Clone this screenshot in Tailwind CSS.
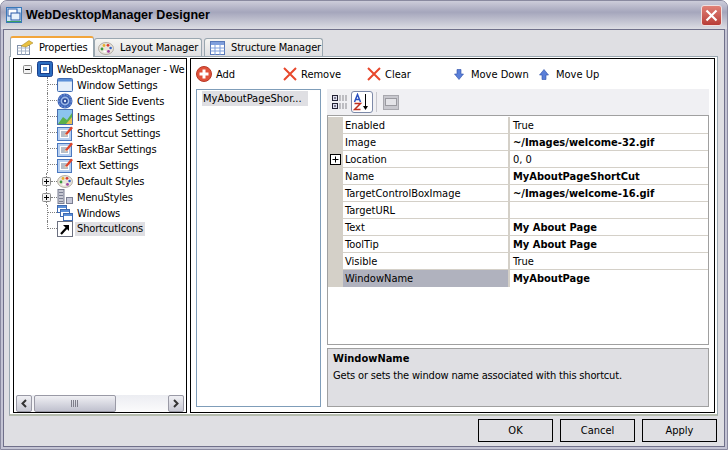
<!DOCTYPE html>
<html>
<head>
<meta charset="utf-8">
<script src="https://cdn.jsdelivr.net/npm/@tailwindcss/browser@4"></script>
</head>
<body class="m-0 overflow-hidden bg-white">
<svg width="0" height="0" class="absolute">
  <defs>
    <symbol id="win" viewBox="0 0 16 16"><rect x="0.5" y="1.5" width="15" height="13" rx="1" fill="#dbe8f8" stroke="#3f6ab0"/><rect x="1" y="2" width="14" height="2.5" fill="#5b8fd8"/><rect x="2" y="5" width="12" height="8" fill="#e4eefa"/></symbol>
    <symbol id="gear" viewBox="0 0 16 16"><circle cx="8" cy="8" r="7.5" fill="#3d64b8"/><circle cx="8" cy="8" r="6.2" fill="none" stroke="#8aa8e0" stroke-dasharray="1.5 1.5"/><circle cx="8" cy="8" r="4.4" fill="#9db9e8"/><circle cx="8" cy="8" r="2.8" fill="#2a4a9a"/><circle cx="8" cy="8" r="1.2" fill="#e4ecfa"/></symbol>
    <symbol id="img" viewBox="0 0 16 16"><rect x="0.5" y="0.5" width="15" height="15" fill="#8cc4ee" stroke="#4a6fb0"/><path d="M1 15 L6 8 L10 11 L15 4 V15 Z" fill="#5ab04a"/><path d="M9 15 L15 8 V15 Z" fill="#e8c050"/></symbol>
    <symbol id="note" viewBox="0 0 16 16"><rect x="0.5" y="2.5" width="14" height="13" fill="#b8d0f0" stroke="#4a78c0"/><rect x="3" y="5" width="9" height="8" fill="#fff"/><path d="M4 7h6M4 9h5M4 11h7" stroke="#6a7a90"/><path d="M8 9 L14 1.5 L16 3 L10 10 Z" fill="#e0452a"/><path d="M8 9 L7.5 11 L10 10 Z" fill="#f0d0a0"/></symbol>
    <symbol id="palette" viewBox="0 0 16 16"><ellipse cx="8" cy="8.5" rx="7.5" ry="6" fill="#e9e4da" stroke="#9a9488" stroke-width="0.7"/><circle cx="4" cy="9" r="1.4" fill="#3a9a40"/><circle cx="6" cy="5.5" r="1.4" fill="#e8b030"/><circle cx="10" cy="5.3" r="1.4" fill="#d83a30"/><circle cx="12.6" cy="8" r="1.3" fill="#3060c8"/><circle cx="10.5" cy="11.4" r="1.4" fill="#a040a0"/><ellipse cx="6.8" cy="11.4" rx="1.4" ry="1" fill="#fff"/></symbol>
    <symbol id="menu" viewBox="0 0 16 16"><rect x="1" y="0.5" width="6" height="14" fill="#c6c8d2" stroke="#7a7e92"/><path d="M2 3.5h4M2 6.5h4M2 9.5h4M2 12.5h4" stroke="#7a7e92"/><rect x="9.5" y="8.5" width="6" height="6" fill="#c6c8d8" stroke="#7a7e92"/></symbol>
    <symbol id="wins" viewBox="0 0 16 16"><rect x="0.5" y="0.5" width="9" height="7" fill="#fff" stroke="#3f6ab0"/><rect x="1" y="1" width="8" height="2" fill="#5b8fd8"/><rect x="3.5" y="4.5" width="9" height="7" fill="#fff" stroke="#3f6ab0"/><rect x="4" y="5" width="8" height="2" fill="#5b8fd8"/><rect x="6.5" y="8.5" width="9" height="7" fill="#fff" stroke="#3f6ab0"/><rect x="7" y="9" width="8" height="2" fill="#5b8fd8"/></symbol>
    <symbol id="short" viewBox="0 0 16 16"><rect x="0.5" y="0.5" width="15" height="15" fill="#fff" stroke="#6b7080"/><path d="M4 13 L10 6.5" stroke="#000" stroke-width="2.2"/><path d="M6 4 H12 V10 Z" fill="#000"/></symbol>
    <symbol id="minus" viewBox="0 0 9 9"><rect x="0.5" y="0.5" width="8" height="8" rx="1" fill="#f2f2f2" stroke="#8a8a8a"/><path d="M2 4.5h5" stroke="#000"/></symbol>
    <symbol id="plus" viewBox="0 0 9 9"><rect x="0.5" y="0.5" width="8" height="8" rx="1" fill="#f2f2f2" stroke="#8a8a8a"/><path d="M2 4.5h5M4.5 2v5" stroke="#000"/></symbol>
    <symbol id="x" viewBox="0 0 14 14"><path d="M1 1 L13 13 M13 1 L1 13" stroke="#e8482c" stroke-width="2"/></symbol>
  </defs>
</svg>
<div class="w-[728px] h-[450px] flex flex-col bg-[#c4c4d4] border border-[#8a8aa0] rounded-t-[7px] overflow-hidden text-[11px] leading-[13px] text-black font-['DejaVu_Sans_Condensed','Liberation_Sans',sans-serif]">
  <!-- title bar -->
  <div class="h-[28px] shrink-0 flex items-center pl-[5px] pr-[5px] bg-gradient-to-b from-[#cdcdda] via-[#a5a6bc] via-40% to-[#dddde3]">
    <svg class="w-[16px] h-[16px] shrink-0" viewBox="0 0 16 16"><rect x="0.5" y="0.5" width="15" height="15" fill="#cfe3f7" stroke="#3a78b8"/><rect x="2" y="2" width="9" height="7" fill="#fff" stroke="#2a5aa8"/><rect x="5" y="6" width="9" height="7" fill="#e8f2fc" stroke="#2a5aa8"/><path d="M1 14.5h14" stroke="#3aa060"/></svg>
    <span class="ml-[4px] text-[12.5px] font-bold text-black whitespace-nowrap font-['Liberation_Sans',sans-serif]">WebDesktopManager Designer</span>
    <div class="ml-auto w-[21px] h-[21px] rounded-[3px] border border-[#efe0e0] bg-gradient-to-b from-[#e08076] to-[#b83c38] flex items-center justify-center">
      <svg class="w-[13px] h-[13px]" viewBox="0 0 13 13"><path d="M1.5 1.5 L11.5 11.5 M11.5 1.5 L1.5 11.5" stroke="#fff" stroke-width="2.2"/></svg>
    </div>
  </div>
  <!-- body -->
  <div class="flex-1 mx-[2px] mb-[2px] flex flex-col bg-[#dfdfe3] border border-[#70708a]">
    <!-- tabs -->
    <div class="h-[26px] shrink-0 flex items-end pl-[6px] tracking-[-0.15px]">
      <div class="relative z-10 w-[84px] h-[21px] -mb-[1px] flex items-center gap-[6px] pl-[6px] bg-white border border-b-0 border-[#9aa7b0] border-t-[2px] border-t-[#f2a53a] rounded-t-[3px]">
        <svg class="w-[16px] h-[16px] shrink-0" viewBox="0 0 16 16"><rect x="0.5" y="5.5" width="12" height="9" fill="#fff" stroke="#7f8fa8"/><path d="M0.5 8h12M4.5 5.5v9M8.5 5.5v9M0.5 11h12" stroke="#a8b6ca"/><path d="M4 6 L12 0.5 L16 3 L9 7 Z" fill="#e8c040" stroke="#a08020" stroke-width="0.5"/></svg>
        <span class="whitespace-nowrap">Properties</span>
      </div>
      <div class="w-[108px] h-[18px] flex items-center gap-[6px] pl-[3px] bg-gradient-to-b from-[#f5f5f2] to-[#e0e0e2] border border-b-0 border-[#9aa7b0] rounded-t-[3px]">
        <svg class="w-[16px] h-[16px] shrink-0"><use href="#palette"/></svg>
        <span class="whitespace-nowrap">Layout Manager</span>
      </div>
      <div class="w-[119px] h-[18px] ml-[2px] flex items-center gap-[6px] pl-[5px] bg-gradient-to-b from-[#f5f5f2] to-[#e0e0e2] border border-b-0 border-[#9aa7b0] rounded-t-[3px]">
        <svg class="w-[15px] h-[14px] shrink-0" viewBox="0 0 15 14"><rect x="0.5" y="0.5" width="14" height="13" fill="#fff" stroke="#5878b8"/><rect x="1" y="1" width="13" height="3" fill="#7f9fdc"/><path d="M0.5 7h14M0.5 10h14M5 4v10M10 4v10" stroke="#7f9fdc"/></svg>
        <span class="whitespace-nowrap">Structure Manager</span>
      </div>
    </div>
    <!-- panel -->
    <div class="ml-[5px] w-[709px] h-[360px] shrink-0 bg-white border border-[#9aa7b0] border-b-[2px] border-b-[#b5bcae] pt-[1px] pl-[3px] flex gap-[3px]">
      <!-- tree -->
      <div class="w-[174px] h-[355px] border border-black bg-white flex flex-col tracking-[-0.15px]">
        <div class="flex-1 pt-[2px] overflow-hidden">
          <div class="h-[16px] flex items-center whitespace-nowrap pl-[9px]">
            <svg class="w-[9px] h-[9px] shrink-0"><use href="#minus"/></svg>
            <svg class="w-[16px] h-[16px] ml-[5px] shrink-0" viewBox="0 0 16 16"><rect x="0.5" y="0.5" width="15" height="15" rx="2" fill="#2a6cc0" stroke="#1a3f8a"/><rect x="3.5" y="3.5" width="9" height="9" fill="#fff" stroke="#1a3f8a"/><path d="M6 6h4v4H6z" fill="#6aa0e0"/></svg>
            <span class="ml-[4px]">WebDesktopManager - We</span>
          </div>
          <div class="h-[16px] flex items-center whitespace-nowrap pl-[33px]"><span class="w-[10px] h-[16px] border-l border-dotted border-[#808080]"><span class="block h-[8px] border-b border-dotted border-[#808080]"></span></span><svg class="w-[16px] h-[16px] shrink-0"><use href="#win"/></svg><span class="ml-[4px]">Window Settings</span></div>
          <div class="h-[16px] flex items-center whitespace-nowrap pl-[33px]"><span class="w-[10px] h-[16px] border-l border-dotted border-[#808080]"><span class="block h-[8px] border-b border-dotted border-[#808080]"></span></span><svg class="w-[16px] h-[16px] shrink-0"><use href="#gear"/></svg><span class="ml-[4px]">Client Side Events</span></div>
          <div class="h-[16px] flex items-center whitespace-nowrap pl-[33px]"><span class="w-[10px] h-[16px] border-l border-dotted border-[#808080]"><span class="block h-[8px] border-b border-dotted border-[#808080]"></span></span><svg class="w-[16px] h-[16px] shrink-0"><use href="#img"/></svg><span class="ml-[4px]">Images Settings</span></div>
          <div class="h-[16px] flex items-center whitespace-nowrap pl-[33px]"><span class="w-[10px] h-[16px] border-l border-dotted border-[#808080]"><span class="block h-[8px] border-b border-dotted border-[#808080]"></span></span><svg class="w-[16px] h-[16px] shrink-0"><use href="#note"/></svg><span class="ml-[4px]">Shortcut Settings</span></div>
          <div class="h-[16px] flex items-center whitespace-nowrap pl-[33px]"><span class="w-[10px] h-[16px] border-l border-dotted border-[#808080]"><span class="block h-[8px] border-b border-dotted border-[#808080]"></span></span><svg class="w-[16px] h-[16px] shrink-0"><use href="#note"/></svg><span class="ml-[4px]">TaskBar Settings</span></div>
          <div class="h-[16px] flex items-center whitespace-nowrap pl-[33px]"><span class="w-[10px] h-[16px] border-l border-dotted border-[#808080]"><span class="block h-[8px] border-b border-dotted border-[#808080]"></span></span><svg class="w-[16px] h-[16px] shrink-0"><use href="#note"/></svg><span class="ml-[4px]">Text Settings</span></div>
          <div class="h-[16px] flex items-center whitespace-nowrap pl-[28px]"><span class="w-[9px] h-[16px] flex flex-col items-center justify-between shrink-0"><span class="h-[4px] border-l border-dotted border-[#808080]"></span><svg class="w-[9px] h-[9px] shrink-0"><use href="#plus"/></svg><span class="h-[3px] border-l border-dotted border-[#808080]"></span></span><span class="w-[6px] border-b border-dotted border-[#808080]"></span><svg class="w-[16px] h-[16px] shrink-0"><use href="#palette"/></svg><span class="ml-[4px]">Default Styles</span></div>
          <div class="h-[16px] flex items-center whitespace-nowrap pl-[28px]"><span class="w-[9px] h-[16px] flex flex-col items-center justify-between shrink-0"><span class="h-[4px] border-l border-dotted border-[#808080]"></span><svg class="w-[9px] h-[9px] shrink-0"><use href="#plus"/></svg><span class="h-[3px] border-l border-dotted border-[#808080]"></span></span><span class="w-[6px] border-b border-dotted border-[#808080]"></span><svg class="w-[16px] h-[16px] shrink-0"><use href="#menu"/></svg><span class="ml-[4px]">MenuStyles</span></div>
          <div class="h-[16px] flex items-center whitespace-nowrap pl-[33px]"><span class="w-[10px] h-[16px] border-l border-dotted border-[#808080]"><span class="block h-[8px] border-b border-dotted border-[#808080]"></span></span><svg class="w-[16px] h-[16px] shrink-0"><use href="#wins"/></svg><span class="ml-[4px]">Windows</span></div>
          <div class="h-[16px] flex items-center whitespace-nowrap pl-[33px]"><span class="w-[10px] h-[8px] self-start border-l border-b border-dotted border-[#808080]"></span><svg class="w-[16px] h-[16px] shrink-0"><use href="#short"/></svg><span class="ml-[2px] px-[2px] h-[14px] leading-[14px] bg-[#dfdfe3]">ShortcutIcons</span></div>
        </div>
        <!-- scrollbar -->
        <div class="h-[17px] mx-[2px] shrink-0 flex bg-gradient-to-b from-[#ecedf2] to-[#fbfbfc]">
          <div class="w-[16px] border border-[#9a9aa6] rounded-[2px] bg-gradient-to-b from-[#f0f0f4] to-[#c8c9d4] flex items-center justify-center"><svg class="w-[8px] h-[9px]" viewBox="0 0 8 9"><path d="M6 1 L2.5 4.5 L6 8" fill="none" stroke="#333" stroke-width="2"/></svg></div>
          <div class="w-[82px] ml-[2px] border border-[#9a9aa6] rounded-[2px] bg-gradient-to-b from-[#f0f0f4] to-[#c0c1ce] flex items-center justify-center"><svg class="w-[8px] h-[7px]" viewBox="0 0 8 7"><path d="M0.5 0v7M2.5 0v7M4.5 0v7M6.5 0v7" stroke="#7e7e8a"/></svg></div>
          <div class="flex-1"></div>
          <div class="w-[16px] border border-[#9a9aa6] rounded-[2px] bg-gradient-to-b from-[#f0f0f4] to-[#c8c9d4] flex items-center justify-center"><svg class="w-[8px] h-[9px]" viewBox="0 0 8 9"><path d="M2 1 L5.5 4.5 L2 8" fill="none" stroke="#333" stroke-width="2"/></svg></div>
        </div>
      </div>
      <!-- right -->
      <div class="w-[525px] h-[355px] border border-black bg-white flex flex-col pl-[5px]">
        <div class="h-[30px] shrink-0 flex items-center whitespace-nowrap">
          <svg class="w-[16px] h-[16px] shrink-0" viewBox="0 0 16 16"><circle cx="8" cy="8" r="7.5" fill="#e0523a" stroke="#b83a28"/><path d="M8 3.5v9M3.5 8h9" stroke="#fff" stroke-width="3"/></svg>
          <span class="ml-[4px] w-[67px]">Add</span>
          <svg class="w-[14px] h-[14px] shrink-0"><use href="#x"/></svg>
          <span class="ml-[4px] w-[66px]">Remove</span>
          <svg class="w-[14px] h-[14px] shrink-0"><use href="#x"/></svg>
          <span class="ml-[4px] w-[69px]">Clear</span>
          <svg class="w-[10px] h-[11px] shrink-0" viewBox="0 0 10 11"><path d="M3 0.5h4V5h2.5L5 10.5 0.5 5H3z" fill="#5a7fd8" stroke="#2e4fa8" stroke-width="0.6"/></svg>
          <span class="ml-[7px] w-[68px]">Move Down</span>
          <svg class="w-[10px] h-[11px] shrink-0" viewBox="0 0 10 11"><path d="M3 10.5h4V6h2.5L5 0.5 0.5 6H3z" fill="#5a7fd8" stroke="#2e4fa8" stroke-width="0.6"/></svg>
          <span class="ml-[7px]">Move Up</span>
        </div>
        <div class="flex gap-[6px] h-[318px]">
          <div class="w-[125px] h-[318px] border border-[#7f9db9] pt-[1px] pl-[5px]">
            <div class="w-[106px] h-[15px] leading-[15px] bg-[#dfdfe3] pl-[1px] whitespace-nowrap">MyAboutPageShor...</div>
          </div>
          <div class="w-[382px] flex flex-col">
            <div class="h-[26px] shrink-0 bg-[#f0f0f3] flex items-center pl-[5px]">
              <svg class="w-[16px] h-[16px] shrink-0" viewBox="0 0 16 16"><rect x="0.5" y="1.5" width="5" height="5" fill="#dde" stroke="#223"/><rect x="0.5" y="9.5" width="5" height="5" fill="#dde" stroke="#223"/><path d="M2 4h2M2 12h2" stroke="#223"/><path d="M7 2h8M7 4h8M7 6h8M7 10h8M7 12h8M7 14h8" stroke="#8a8a90" stroke-dasharray="2 1"/></svg>
              <div class="ml-[3px] w-[22px] h-[22px] bg-white border border-[#7d8aa8] rounded-[3px] flex items-center justify-center">
                <svg class="w-[18px] h-[18px]" viewBox="0 0 18 18"><path d="M1.5 9 L4.5 1.5 L7.5 9 M2.5 6.5h4" fill="none" stroke="#2a50c0" stroke-width="1.5"/><path d="M1.5 10.5h6L1.5 16.5h6" fill="none" stroke="#c03020" stroke-width="1.5"/><path d="M12.5 1v13" stroke="#000"/><path d="M10 13h5l-2.5 4z" fill="#000"/></svg>
              </div>
              <div class="ml-[3px] w-px h-[20px] bg-[#c8c8ce]"></div>
              <div class="ml-[6px] w-[16px] h-[15px] bg-[#c8c8ce] border border-[#a8a8ae] flex items-center justify-center"><div class="w-[12px] h-[8px] bg-[#e4e4e8] border border-[#9a9aa0]"></div></div>
            </div>
            <div class="h-[230px] shrink-0 border border-[#a0a0a0] bg-white flex flex-col pt-[1px]">
              <div class="h-[17px] flex border-b border-[#d4d0c8]"><div class="w-[15px] bg-[#d4d0c8]"></div><div class="w-[167px] pl-[2px] border-r-2 border-[#d4d0c8] leading-[17px]">Enabled</div><div class="pl-[3px] leading-[17px]">True</div></div>
              <div class="h-[17px] flex border-b border-[#d4d0c8]"><div class="w-[15px] bg-[#d4d0c8]"></div><div class="w-[167px] pl-[2px] border-r-2 border-[#d4d0c8] leading-[17px]">Image</div><div class="pl-[3px] leading-[17px] font-bold">~/Images/welcome-32.gif</div></div>
              <div class="h-[17px] flex border-b border-[#d4d0c8]"><div class="w-[15px] bg-[#d4d0c8] flex items-center pl-[2px]"><svg class="w-[11px] h-[11px]" viewBox="0 0 11 11"><rect x="0.5" y="0.5" width="10" height="10" fill="#fff" stroke="#000"/><path d="M2.5 5.5h6M5.5 2.5v6" stroke="#000"/></svg></div><div class="w-[167px] pl-[2px] border-r-2 border-[#d4d0c8] leading-[17px]">Location</div><div class="pl-[3px] leading-[17px]">0, 0</div></div>
              <div class="h-[17px] flex border-b border-[#d4d0c8]"><div class="w-[15px] bg-[#d4d0c8]"></div><div class="w-[167px] pl-[2px] border-r-2 border-[#d4d0c8] leading-[17px]">Name</div><div class="pl-[3px] leading-[17px] font-bold">MyAboutPageShortCut</div></div>
              <div class="h-[17px] flex border-b border-[#d4d0c8]"><div class="w-[15px] bg-[#d4d0c8]"></div><div class="w-[167px] pl-[2px] border-r-2 border-[#d4d0c8] leading-[17px]">TargetControlBoxImage</div><div class="pl-[3px] leading-[17px] font-bold">~/Images/welcome-16.gif</div></div>
              <div class="h-[17px] flex border-b border-[#d4d0c8]"><div class="w-[15px] bg-[#d4d0c8]"></div><div class="w-[167px] pl-[2px] border-r-2 border-[#d4d0c8] leading-[17px]">TargetURL</div><div class="pl-[3px] leading-[17px]"></div></div>
              <div class="h-[17px] flex border-b border-[#d4d0c8]"><div class="w-[15px] bg-[#d4d0c8]"></div><div class="w-[167px] pl-[2px] border-r-2 border-[#d4d0c8] leading-[17px]">Text</div><div class="pl-[3px] leading-[17px] font-bold">My About Page</div></div>
              <div class="h-[17px] flex border-b border-[#d4d0c8]"><div class="w-[15px] bg-[#d4d0c8]"></div><div class="w-[167px] pl-[2px] border-r-2 border-[#d4d0c8] leading-[17px]">ToolTip</div><div class="pl-[3px] leading-[17px] font-bold">My About Page</div></div>
              <div class="h-[17px] flex border-b border-[#d4d0c8]"><div class="w-[15px] bg-[#d4d0c8]"></div><div class="w-[167px] pl-[2px] border-r-2 border-[#d4d0c8] leading-[17px]">Visible</div><div class="pl-[3px] leading-[17px]">True</div></div>
              <div class="h-[17px] flex"><div class="w-[15px] bg-[#d4d0c8]"></div><div class="w-[167px] pl-[2px] border-r-2 border-[#d4d0c8] leading-[17px] bg-[#b0b2be]">WindowName</div><div class="pl-[3px] leading-[17px] font-bold">MyAboutPage</div></div>
            </div>
            <div class="mt-[3px] h-[59px] border border-[#a0a0a0] bg-[#dfdfe3] pl-[5px] pt-[3px]">
              <div class="font-bold leading-[14px]">WindowName</div>
              <div class="mt-[3px] leading-[14px] tracking-[-0.18px]">Gets or sets the window name associated with this shortcut.</div>
            </div>
          </div>
        </div>
      </div>
    </div>
    <!-- buttons -->
    <div class="flex-1 flex justify-end items-start gap-[7px] pt-[3px] pr-[7px]">
      <div class="w-[75px] h-[23px] border border-black flex items-center justify-center">OK</div>
      <div class="w-[75px] h-[23px] border border-black flex items-center justify-center">Cancel</div>
      <div class="w-[75px] h-[23px] border border-black flex items-center justify-center">Apply</div>
    </div>
  </div>
</div>
</body>
</html>
